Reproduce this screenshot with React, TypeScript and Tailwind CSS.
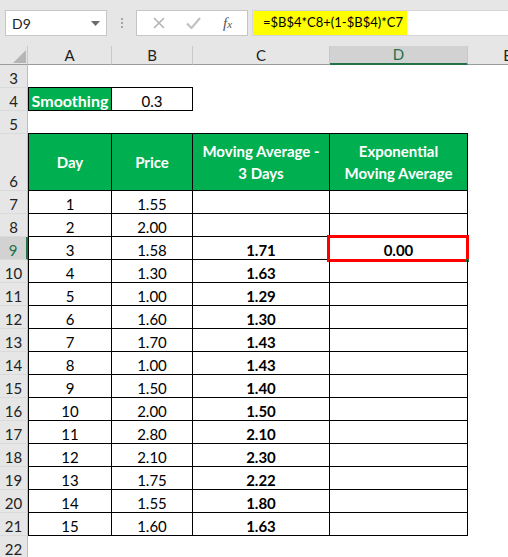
import React from "react";

type CellSpec = {
  t?: string;
  cls?: string;
  extra?: React.ReactNode;
};

const W = ["w-[84px]", "w-[81px]", "w-[137px]", "w-[138px]", "w-[80px]"];

const prices = ["1.55", "2.00", "1.58", "1.30", "1.00", "1.60", "1.70", "1.00", "1.50", "2.00", "2.80", "2.10", "1.75", "1.55", "1.60"];
const ma = ["", "", "1.71", "1.63", "1.29", "1.30", "1.43", "1.43", "1.40", "1.50", "2.10", "2.30", "2.22", "1.80", "1.63"];

function RowHead({ n, h, sel }: { n: number; h: string; sel?: boolean }) {
  return (
    <div
      className={
        "shrink-0 w-[28px] flex items-end justify-center leading-[18px] text-[15px] border-b border-[#dadada] " +
        h +
        (sel
          ? " bg-[#d2d2d2] text-[#217346] border-r-2 border-r-[#217346]"
          : " bg-[#e6e6e6] text-[#222] border-r border-r-[#bdbdbd]")
      }
    >
      {n}
    </div>
  );
}

function Row({ n, h = "h-[23px]", cells, sel }: { n: number; h?: string; cells: CellSpec[]; sel?: boolean }) {
  return (
    <div className={"flex shrink-0 " + h}>
      <RowHead n={n} h={h} sel={sel} />
      {W.map((w, i) => {
        const c = cells[i] || {};
        return (
          <div
            key={i}
            className={
              "shrink-0 relative flex justify-center text-[15px] text-black " +
              w +
              " " +
              (c.cls || "items-end leading-[18px]")
            }
          >
            {c.t}
            {c.extra}
          </div>
        );
      })}
    </div>
  );
}

export default function App() {
  const bodyRows = prices.map((p, i) => {
    const n = i + 7;
    const base = "items-end leading-[18px] border-b border-r border-black";
    return (
      <Row
        key={n}
        n={n}
        sel={n === 9}
        cells={[
          { t: String(i + 1), cls: base + " border-l" },
          { t: p, cls: base },
          { t: ma[i], cls: base + " font-bold" },
          n === 9
            ? {
                t: "0.00",
                cls: base + " font-bold",
                extra: (
                  <>
                    <div className="absolute -left-[3px] -top-[2px] w-[142px] h-[27px] border-[3px] border-[#ff0000]" />
                    <div className="absolute -right-[2px] -bottom-[3px] w-[3px] h-[3px] bg-[#217346]" />
                  </>
                ),
              }
            : { t: "", cls: base },
        ]}
      />
    );
  });

  return (
    <div className="w-[508px] h-[557px] overflow-hidden bg-white font-[Lato,'Liberation_Sans',sans-serif] flex flex-col">
      {/* Toolbar */}
      <div className="h-[46px] shrink-0 bg-[#e6e6e6] flex items-start pt-[10px] pl-[5px]">
        <div className="w-[102px] h-[26px] bg-white border border-[#c6c6c6] flex items-center pl-[6px] pr-[6px] text-[14px] text-[#222]">
          <span className="flex-1">D9</span>
          <svg width="9" height="5" viewBox="0 0 9 5">
            <path d="M0 0 L9 0 L4.5 5 Z" fill="#6b6b6b" />
          </svg>
        </div>
        <div className="w-[29px] h-[26px] flex flex-col items-center justify-center gap-[2px]">
          <div className="w-[2px] h-[2px] bg-[#a6a6a6]" />
          <div className="w-[2px] h-[2px] bg-[#a6a6a6]" />
          <div className="w-[2px] h-[2px] bg-[#a6a6a6]" />
        </div>
        <div className="w-[112px] h-[26px] bg-white border border-[#c6c6c6] flex items-center">
          <svg width="12" height="12" viewBox="0 0 12 12" className="ml-[16px]">
            <path d="M1 1 L11 11 M11 1 L1 11" stroke="#b3b3b3" strokeWidth="1.6" />
          </svg>
          <svg width="15" height="12" viewBox="0 0 15 12" className="ml-[21px]">
            <path d="M1 6.5 L5.5 11 L14 1" stroke="#c2c2c2" strokeWidth="2.2" fill="none" />
          </svg>
          <span className="ml-[22px] text-[15px] italic text-[#555] font-['Liberation_Serif',serif]">
            f<span className="text-[11px]">x</span>
          </span>
        </div>
        <div className="ml-[4px] flex-1 h-[26px] bg-white border border-[#d6d6d6] border-r-0 flex items-stretch">
          <div className="w-[154px] bg-[#ffff00] flex items-center pl-[10px] text-[13px] text-black whitespace-nowrap">
            =$B$4*C8+(1-$B$4)*C7
          </div>
        </div>
      </div>

      {/* Column headers */}
      <div className="flex h-[19px] shrink-0 bg-[#e6e6e6] text-[15px] text-[#222]">
        <div className="shrink-0 w-[28px] h-full border-r border-b border-r-[#c8c8c8] border-b-[#9b9b9b] relative">
          <svg width="13" height="13" viewBox="0 0 13 13" className="absolute left-[13px] top-[4px]">
            <path d="M13 0 L13 13 L0 13 Z" fill="#b5b5b5" />
          </svg>
        </div>
        {["A", "B", "C", "D", "E"].map((l, i) => (
          <div
            key={l}
            className={
              "shrink-0 h-full flex items-end justify-center leading-[18px] border-r border-r-[#c8c8c8] " +
              W[i] +
              (l === "D"
                ? " bg-[#d2d2d2] text-[#217346] border-b-2 border-b-[#217346] border-r-[#a8a8a8]"
                : " border-b border-b-[#9b9b9b]")
            }
          >
            {l}
          </div>
        ))}
      </div>

      {/* Sheet */}
      <Row
        n={3}
        cells={[
          { cls: "items-end border-b border-black" },
          { cls: "items-end border-b border-black" },
        ]}
      />
      <Row
        n={4}
        cells={[
          {
            t: "Smoothing",
            cls: "items-end leading-[18px] border-l border-r border-b border-black bg-[#00b050] text-white font-bold text-[16px]",
          },
          { t: "0.3", cls: "items-end leading-[18px] border-r border-b border-black" },
        ]}
      />
      <Row
        n={5}
        cells={[
          { cls: "border-b border-black" },
          { cls: "border-b border-black" },
          { cls: "border-b border-black" },
          { cls: "border-b border-black" },
        ]}
      />
      <Row
        n={6}
        h="h-[57px]"
        cells={[
          {
            t: "Day",
            cls: "items-center leading-[22px] border-l border-r border-b border-black bg-[#00b050] text-white font-bold",
          },
          {
            t: "Price",
            cls: "items-center leading-[22px] border-r border-b border-black bg-[#00b050] text-white font-bold",
          },
          {
            extra: (
              <div className="text-center">
                Moving Average -<br />3 Days
              </div>
            ),
            cls: "items-center leading-[22px] border-r border-b border-black bg-[#00b050] text-white font-bold",
          },
          {
            extra: (
              <div className="text-center">
                Exponential
                <br />
                Moving Average
              </div>
            ),
            cls: "items-center leading-[22px] border-r border-b border-black bg-[#00b050] text-white font-bold",
          },
        ]}
      />
      {bodyRows}
      <Row n={22} cells={[]} />
    </div>
  );
}
